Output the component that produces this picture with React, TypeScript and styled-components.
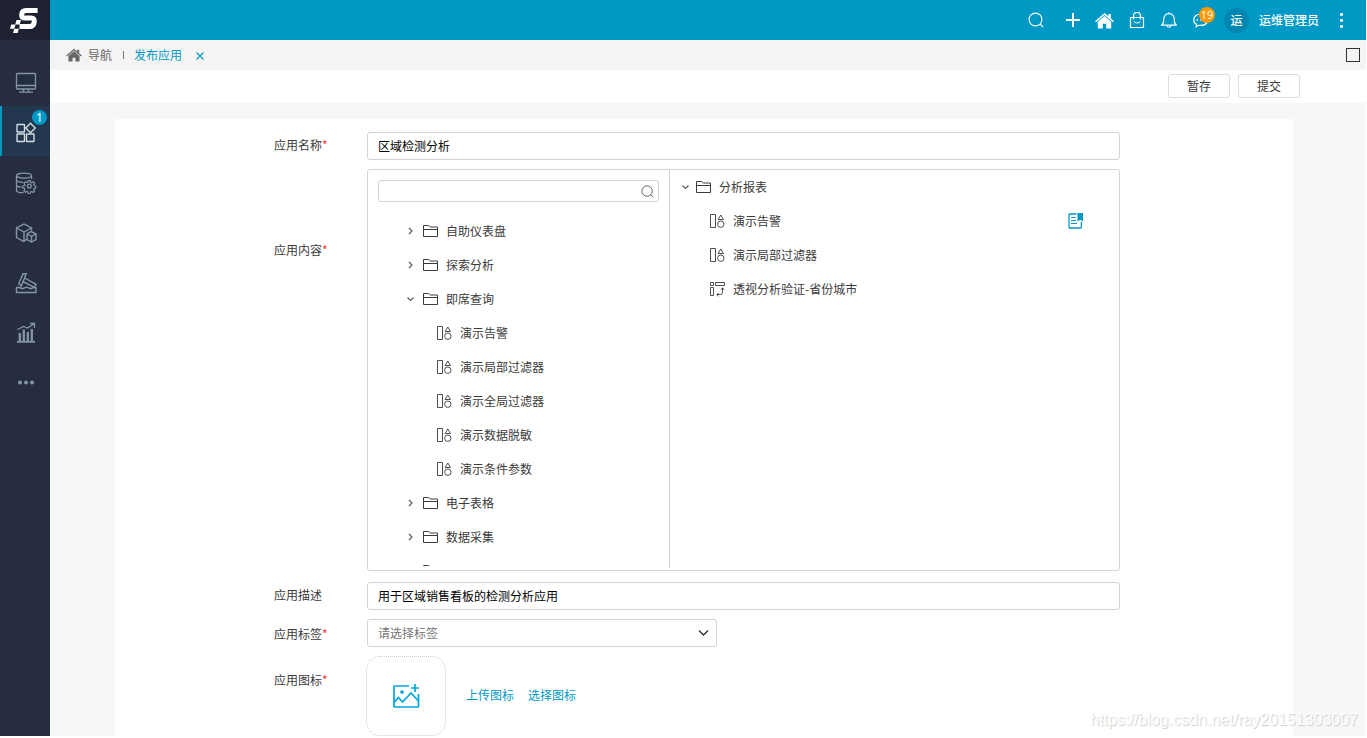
import React from 'react';
import styled, { createGlobalStyle } from 'styled-components';

const GlobalStyle = createGlobalStyle`
  *, *::before, *::after { box-sizing: border-box; }
  body {
    margin: 0;
    background: #fff;
    color: #3a3a3a;
    font: 12px/18px 'Noto Sans CJK SC', sans-serif;
  }
  button, input, select { font: inherit; color: inherit; }
  button { padding: 0; border: 0; background: none; cursor: pointer; }
  ul { margin: 0; padding: 0; list-style: none; }
  svg { display: block; flex: none; }
`;

const Shell = styled.div`
  position: relative;
  display: grid;
  grid-template-columns: 50px minmax(0, 1fr);
  padding-right: 1px;
`;

const Sidebar = styled.nav`
  background: #272d41;
`;

const Logo = styled.a`
  display: block;
  height: 40px;
  margin-bottom: 16px;
  background: #1d2131;
`;

const SideItem = styled.button<{ $active?: boolean }>`
  position: relative;
  display: flex;
  align-items: center;
  justify-content: center;
  width: 100%;
  height: 50px;
  padding: 4px 0 0 0;
  border-left: 2px solid ${(p) => (p.$active ? '#0099c6' : 'transparent')};
  background: ${(p) => (p.$active ? '#23384f' : 'transparent')};
  color: ${(p) => (p.$active ? '#d3dce2' : '#8496a6')};
`;

const SideBadge = styled.span`
  position: absolute;
  top: 4px;
  right: 3px;
  width: 15px;
  height: 15px;
  border-radius: 50%;
  background: #0099c6;
  color: #fff;
  font: 12px/15px 'Noto Sans', sans-serif;
  text-align: center;
`;

const Main = styled.div`
  display: flex;
  flex-direction: column;
`;

const Header = styled.header`
  display: flex;
  align-items: center;
  justify-content: flex-end;
  height: 40px;
  padding-right: 15px;
  background: #0098c5;
  color: #fff;
`;

const HeaderButton = styled.button<{ $gap?: boolean }>`
  position: relative;
  display: flex;
  align-items: center;
  justify-content: center;
  width: 32px;
  height: 40px;
  margin-right: ${(p) => (p.$gap ? '5px' : '0')};
`;

const CountBadge = styled.span`
  position: absolute;
  top: 7px;
  left: 14px;
  width: 16px;
  height: 16px;
  border-radius: 50%;
  background: #ff9900;
  font: 11px/16px 'Open Sans', sans-serif;
  text-align: center;
`;

const Avatar = styled.span`
  width: 25px;
  height: 25px;
  margin: 0 10px 0 7px;
  border-radius: 50%;
  background: #0086b0;
  font-weight: 500;
  line-height: 24px;
  text-align: center;
`;

const UserName = styled.span`
  margin-right: 12px;
  font-weight: 500;
`;

const MenuButton = styled.button`
  display: flex;
  align-items: center;
  justify-content: center;
  width: 20px;
  height: 40px;
`;

const TabBar = styled.div`
  display: flex;
  align-items: center;
  height: 30px;
  padding: 0 6px 0 16px;
  background: #f4f4f4;
  color: #666;
`;

const NavLink = styled.a`
  display: flex;
  align-items: center;
  gap: 6px;
  color: #666;
  text-decoration: none;
`;

const Divider = styled.span`
  width: 1px;
  height: 8px;
  margin: 0 10px 0 11px;
  background: #777;
`;

const CurrentTab = styled.a`
  margin-right: 14px;
  color: #0099c6;
  text-decoration: none;
`;

const CloseButton = styled.button`
  padding: 2px 0 0 0;
  color: #0099c6;
`;

const Maximize = styled.button`
  width: 14px;
  height: 14px;
  margin-left: auto;
  border: 1px solid #333;
`;

const Toolbar = styled.div`
  display: flex;
  justify-content: flex-end;
  gap: 8px;
  height: 33px;
  padding: 4px 66px 0 0;
`;

const ToolButton = styled.button`
  width: 62px;
  height: 24px;
  border: 1px solid #ddd;
  border-radius: 3px;
  background: #fff;
`;

const Content = styled.main`
  flex: 1;
  padding: 16px 73px 0 65px;
  background: #f7f7f7;
`;

const Card = styled.form`
  display: flex;
  flex-direction: column;
  gap: 9px;
  padding: 13px 173px 0 159px;
  background: #fff;
`;

const Row = styled.div`
  display: flex;
`;

const Label = styled.label<{ $top?: number }>`
  flex: none;
  width: 93px;
  padding-top: ${(p) => p.$top ?? 4}px;
`;

const Star = styled.span`
  color: #f33;
`;

const TextInput = styled.input`
  flex: 1;
  min-width: 0;
  height: 28px;
  padding: 0 10px 2px;
  border: 1px solid #d4d4d4;
  border-radius: 3px;
  color: #000;
`;

const Panels = styled.div`
  display: grid;
  grid-template-columns: 302px 1fr;
  flex: 1;
  height: 402px;
  margin-bottom: 2px;
  border: 1px solid #d4d4d4;
  border-radius: 3px;
`;

const SourcePanel = styled.div`
  display: flex;
  flex-direction: column;
  gap: 12px;
  height: 398px;
  padding: 10px 10px 2px;
  border-right: 1px solid #d4d4d4;
`;

const SearchBox = styled.div`
  display: flex;
  align-items: center;
  flex: none;
  height: 22px;
  padding-right: 4px;
  border: 1px solid #d4d4d4;
  border-radius: 3px;
  color: #666;
`;

const SearchInput = styled.input`
  flex: 1;
  min-width: 0;
  height: 18px;
  border: 0;
  background: none;
  outline: none;
`;

const Tree = styled.ul`
  flex: 1;
  min-height: 0;
  overflow: hidden;
`;

const TreeRow = styled.li<{ $indent: number }>`
  display: flex;
  align-items: center;
  height: 34px;
  padding: 0 35px 0 ${(p) => p.$indent}px;
`;

const Toggle = styled.button<{ $gap: number }>`
  width: 9px;
  height: 12px;
  margin-right: ${(p) => p.$gap}px;
  color: #555;
`;

const TreeText = styled.span`
  flex: 1;
  margin-left: 8px;
  white-space: nowrap;
`;

const ActionButton = styled.button`
  color: #0099c6;
`;

const SelectWrap = styled.div`
  position: relative;
  width: 350px;
  color: #333;

  svg {
    position: absolute;
    top: 10px;
    right: 8px;
    pointer-events: none;
  }
`;

const Select = styled.select`
  appearance: none;
  width: 100%;
  height: 28px;
  padding: 0 30px 0 10px;
  border: 1px solid #d4d4d4;
  border-radius: 3px;
  background: #fff;
  color: #757575;
`;

const IconPicker = styled.div`
  display: flex;
  align-items: center;
  gap: 14px;
`;

const IconBox = styled.button`
  display: flex;
  align-items: center;
  justify-content: center;
  width: 80px;
  height: 80px;
  margin: 0 6px 0 -1px;
  border: 1px dotted #ccc;
  border-radius: 14px;
  color: #00a8dc;
`;

const PickLink = styled.a`
  padding-bottom: 2px;
  color: #0099c6;
  text-decoration: none;
`;

const Watermark = styled.span`
  position: absolute;
  right: 9px;
  bottom: 6px;
  color: #fff;
  font: 16px/20px 'Liberation Sans', sans-serif;
  text-shadow: 1px 1px 1px #ccc;
  pointer-events: none;
`;

type SvgProps = { w: number; h: number; sw?: number; children: React.ReactNode };

const Svg = ({ w, h, sw = 1, children }: SvgProps) => (
  <svg width={w} height={h} viewBox={`0 0 ${w} ${h}`} fill="none" stroke="currentColor" strokeWidth={sw} aria-hidden="true">
    {children}
  </svg>
);

const LogoMark = () => (
  <svg width="50" height="40" viewBox="0 0 50 40" aria-hidden="true">
    <path
      d="M37.6 10.4H26Q22.1 10.4 21.700 14.200Q21.300 18 24.800 18H31Q34.800 18 34.300 21.800Q33.700 26.600 29.500 26.600H19.500"
      fill="none" stroke="#fff" strokeWidth="5"
    />
    <path d="M16.500 20h4.500l-1.300 4.400h-4.500zM11.200 24.400h4.300l-1.200 4.400H10zM14.300 28.800h4.600l-1.300 4.200H13z" fill="#fff" />
  </svg>
);

const MonitorIcon = () => (
  <Svg w={22} h={22} sw={1.3}>
    <rect x="1.5" y="1.5" width="19" height="15.5" rx="1" />
    <path d="M1.5 13.5h19M8.5 17v2.5M13.5 17v2.5M4 20.2h14" />
  </Svg>
);

const AppsIcon = () => (
  <Svg w={22} h={22} sw={1.4}>
    <rect x="2" y="2.500" width="7.5" height="7.5" rx=".5" />
    <rect x="2" y="12" width="7.5" height="7.5" rx=".5" />
    <rect x="11.5" y="12" width="7.5" height="7.5" rx=".5" />
    <path d="M15.500 1.300l4.700 4.700-4.700 4.700-4.700-4.700z" />
  </Svg>
);

const DatabaseIcon = () => (
  <Svg w={22} h={22} sw={1.3}>
    <ellipse cx="9" cy="3.6" rx="7.5" ry="2.5" />
    <path d="M1.5 3.6v14.6c0 1.5 3 2.5 7 2.5M16.5 3.6V7M1.5 8.3c.5 1.3 3 2 6.500 2M1.500 13.300c.500 1.300 2.500 1.800 5 1.900" />
    <circle cx="14.300" cy="14" r="1.900" />
    <path d="M13.200 7.900h2.200l.4 1.900 1.300.6 1.700-1.100 1.500 1.600-1 1.600.5 1.300 1.700.4v2.200l-1.800.4-.5 1.200 1 1.600-1.500 1.600-1.700-1.100-1.200.5-.4 1.700h-2.200l-.4-1.800-1.300-.5-1.600 1-1.600-1.500 1.100-1.700-.5-1.200-1.700-.4v-2.200l1.800-.4.5-1.200-1.100-1.700 1.600-1.500 1.600 1 1.200-.5z" transform="translate(1.400 1.400) scale(.9)" />
  </Svg>
);

const CubesIcon = () => (
  <Svg w={22} h={22} sw={1.4}>
    <path d="M12 17l-3.300 2.500L1.500 15.500V6L9 2l7.500 4v2.500M1.500 6L9 10l7.500-4M9 10v9.500" />
    <path d="M16 9.500l5 2.500v5.500L16.500 20 12 17.500V12zM12 12l4.500 2.300L21 12M16.500 14.300V20" />
  </Svg>
);

const GavelIcon = () => (
  <Svg w={22} h={22} sw={1.400}>
    <path d="M8 1.800h3.200L6.300 14 3.800 11.500zM9.700 6L21 12.300l-1.700 3L7.800 9.500" />
    <path d="M1.500 15.500h3l3 1.200 4-1.500 4.500 1.500 2-1h3v4.800h-19.500z" />
  </Svg>
);

const ChartIcon = () => (
  <Svg w={22} h={22} sw={1.300}>
    <path d="M2 19.800h18" strokeWidth="1.800" />
    <path d="M4.800 19v-8M8.800 19V7.500M12.800 19v-9M16.800 19V7" strokeWidth="2.300" />
    <path d="M2.500 7.500l6-3 4 1.500 6.500-4M15 1.500h4.500V6" />
  </Svg>
);

const MoreIcon = () => (
  <Svg w={22} h={22}>
    <g fill="currentColor" stroke="none">
      <circle cx="5" cy="10.500" r="2" />
      <circle cx="11" cy="10.500" r="2" />
      <circle cx="17" cy="10.500" r="2" />
    </g>
  </Svg>
);

const SearchIcon = ({ size = 16 }: { size?: number }) => (
  <svg width={size} height={size} viewBox="0 0 16 16" fill="none" stroke="currentColor" strokeWidth={size > 14 ? 1.1 : 1.2} aria-hidden="true">
    <circle cx="7.500" cy="7.500" r="6.400" />
    <path d="M12 12l3.200 3.200" />
  </svg>
);

const PlusIcon = () => (
  <Svg w={14} h={14} sw={2}><path d="M7 0v14M0 7h14" /></Svg>
);

const HomeIcon = ({ w }: { w: number }) => (
  <svg width={w} height={w - 2} viewBox="0 0 19 17" fill="currentColor" aria-hidden="true">
    <path d="M9.500 1L0 9.200l1 1.100 8.500-7.200 8.500 7.200 1-1.100-3.200-2.800V2h-2.500v2.200z" />
    <path d="M9.500 3.900L2.800 9.700v6.800h5v-4.700h3.400v4.700h5V9.700z" />
  </svg>
);

const BagIcon = () => (
  <Svg w={16} h={16} sw={1.200}>
    <path d="M1.500 5.500h13v10h-13zM4.500 7.500V4a3.500 3.500 0 0 1 7 0v3.500M5 9.500c1.200 2 4.800 2 6 0" />
  </Svg>
);

const BellIcon = () => (
  <Svg w={16} h={16} sw={1.200}>
    <path d="M.5 13.200h15c-1.700-1.200-2.200-2.500-2.200-5 0-4.500-1.800-6.500-5.300-6.500s-5.300 2-5.300 6.500c0 2.500-.5 3.800-2.200 5zM6 13.500c.3 2.300 3.700 2.300 4 0M8 .300v1.500" />
  </Svg>
);

const ChatIcon = () => (
  <Svg w={16} h={16} sw={1.200}>
    <path d="M8 2C4 2 .7 4.300 .7 7.700c0 2 1 3.600 2.800 4.600L3.200 14.800 5.800 13.300c4.700.8 9-1.500 9.200-5.300" />
    <path d="M3.500 8h1.600M7.200 8h1.600M11 8h1.600" strokeWidth="1.600" />
  </Svg>
);

const KebabIcon = () => (
  <Svg w={3} h={15}><path d="M0 1.500h3M0 7.500h3M0 13.500h3" strokeWidth="2.500" /></Svg>
);

const FolderIcon = () => (
  <Svg w={15} h={14}>
    <path d="M.5 12.500v-11h5l2 1.500h7v9.500zM.5 5.500h14" />
  </Svg>
);

const QueryIcon = () => (
  <Svg w={15} h={16} sw={0.9}>
    <path d="M.5 1.500h5v13h-5zM10.800 2l2.700 4.500H8.100z" />
    <circle cx="10.800" cy="11.200" r="3.200" />
  </Svg>
);

const PivotIcon = () => (
  <Svg w={15} h={16} sw={0.9}>
    <path d="M.5 1.500h3v3h-3zM5.500 1.500h9v3h-9zM.5 6.500h3v8h-3zM7 13.500h3.500q2 0 2-2V7M10.700 8.700L12.500 7l1.800 1.700M8.500 11.800L6.800 13.500l1.700 1.700" />
  </Svg>
);

const ReportIcon = () => (
  <Svg w={16} h={16}>
    <path d="M8.500 1H1.700q-.7 0-.7.7v12.600q0 .7.700.7h11q.7 0 .7-.7V9" strokeWidth="1.300" />
    <path d="M3 4.500h4.500M3 7.500h5M3 10.500h6" strokeWidth="1.200" />
    <path d="M9.500 0H15v8.500L12.200 6.800 9.500 8.500z" fill="currentColor" stroke="none" />
  </Svg>
);

const Caret = ({ open }: { open: boolean }) => (
  <Svg w={9} h={9} sw={1.100}>
    <path d={open ? 'M1.500 2.500l3 3 3-3' : 'M3 1l3 3-3 3'} />
  </Svg>
);

const ChevronIcon = () => (
  <Svg w={11} h={9} sw={1.300}><path d="M1 1.500l4.500 4.500 4.500-4.500" /></Svg>
);

const UploadImageIcon = () => (
  <Svg w={28} h={26} sw={1.700}>
    <path d="M17 3H2.500Q2 3 2 3.500v20q0 .5.500.5h23.500q.5 0 .5-.5V11" />
    <path d="M2 19.500l4.500-5 4 4.500L19 10l7.500 8M23 1v8M19 5h8" />
    <circle cx="10" cy="9" r="1" fill="currentColor" />
  </Svg>
);

const CloseIcon = () => (
  <Svg w={8} h={8} sw={1.100}><path d="M.5.5l7 7M7.500.5l-7 7" /></Svg>
);

type Kind = 'folder' | 'query' | 'pivot';
type Node = { name: string; kind: Kind; open?: boolean; action?: boolean };

const sourceNodes: Node[] = [
  { name: '自助仪表盘', kind: 'folder' },
  { name: '探索分析', kind: 'folder' },
  { name: '即席查询', kind: 'folder', open: true },
  { name: '演示告警', kind: 'query' },
  { name: '演示局部过滤器', kind: 'query' },
  { name: '演示全局过滤器', kind: 'query' },
  { name: '演示数据脱敏', kind: 'query' },
  { name: '演示条件参数', kind: 'query' },
  { name: '电子表格', kind: 'folder' },
  { name: '数据采集', kind: 'folder' },
  { name: '', kind: 'folder' },
];

const selectedNodes: Node[] = [
  { name: '分析报表', kind: 'folder', open: true },
  { name: '演示告警', kind: 'query', action: true },
  { name: '演示局部过滤器', kind: 'query' },
  { name: '透视分析验证-省份城市', kind: 'pivot' },
];

const sideItems = [
  { label: '工作台', Icon: MonitorIcon },
  { label: '应用', Icon: AppsIcon, active: true, badge: 1 },
  { label: '数据管理', Icon: DatabaseIcon },
  { label: '模型', Icon: CubesIcon },
  { label: '挖掘', Icon: GavelIcon },
  { label: '分析', Icon: ChartIcon },
  { label: '更多', Icon: MoreIcon },
];

const TOGGLE_WIDTH = 9;
const CHILD_INDENT = 14;

const TreeNode = ({ node, base, gap }: { node: Node; base: number; gap: number }) => (
  <TreeRow $indent={node.kind === 'folder' ? base : base + TOGGLE_WIDTH + gap + CHILD_INDENT}>
    {node.kind === 'folder' && (
      <Toggle type="button" $gap={gap} aria-label={node.open ? '收起' : '展开'}>
        <Caret open={!!node.open} />
      </Toggle>
    )}
    {node.kind === 'folder' && <FolderIcon />}
    {node.kind === 'query' && <QueryIcon />}
    {node.kind === 'pivot' && <PivotIcon />}
    <TreeText>{node.name}</TreeText>
    {node.action && <ActionButton type="button" aria-label="设为首页"><ReportIcon /></ActionButton>}
  </TreeRow>
);

export default function App() {
  return (
    <>
      <GlobalStyle />
      <Shell>
        <Sidebar>
          <Logo href="#" aria-label="首页"><LogoMark /></Logo>
          {sideItems.map(({ label, Icon, active, badge }) => (
            <SideItem key={label} type="button" aria-label={label} $active={active}>
              <Icon />
              {badge && <SideBadge>{badge}</SideBadge>}
            </SideItem>
          ))}
        </Sidebar>
        <Main>
          <Header>
            <HeaderButton $gap aria-label="搜索"><SearchIcon /></HeaderButton>
            <HeaderButton aria-label="新建"><PlusIcon /></HeaderButton>
            <HeaderButton aria-label="主页"><HomeIcon w={19} /></HeaderButton>
            <HeaderButton aria-label="应用商店"><BagIcon /></HeaderButton>
            <HeaderButton aria-label="通知"><BellIcon /></HeaderButton>
            <HeaderButton aria-label="消息"><ChatIcon /><CountBadge>19</CountBadge></HeaderButton>
            <Avatar>运</Avatar>
            <UserName>运维管理员</UserName>
            <MenuButton aria-label="菜单"><KebabIcon /></MenuButton>
          </Header>
          <TabBar>
            <NavLink href="#"><HomeIcon w={16} />导航</NavLink>
            <Divider />
            <CurrentTab href="#">发布应用</CurrentTab>
            <CloseButton aria-label="关闭"><CloseIcon /></CloseButton>
            <Maximize aria-label="最大化" />
          </TabBar>
          <Toolbar>
            <ToolButton type="button">暂存</ToolButton>
            <ToolButton type="button">提交</ToolButton>
          </Toolbar>
          <Content>
            <Card>
              <Row>
                <Label htmlFor="name">应用名称<Star>*</Star></Label>
                <TextInput id="name" defaultValue="区域检测分析" />
              </Row>
              <Row>
                <Label htmlFor="content-search" $top={72}>应用内容<Star>*</Star></Label>
                <Panels>
                  <SourcePanel>
                    <SearchBox>
                      <SearchInput id="content-search" />
                      <SearchIcon size={13} />
                    </SearchBox>
                    <Tree>
                      {sourceNodes.map((n, i) => <TreeNode key={i} node={n} base={28} gap={8} />)}
                    </Tree>
                  </SourcePanel>
                  <Tree>
                    {selectedNodes.map((n, i) => <TreeNode key={i} node={n} base={11} gap={6} />)}
                  </Tree>
                </Panels>
              </Row>
              <Row>
                <Label htmlFor="desc">应用描述</Label>
                <TextInput id="desc" defaultValue="用于区域销售看板的检测分析应用" />
              </Row>
              <Row>
                <Label htmlFor="tag" $top={6}>应用标签<Star>*</Star></Label>
                <SelectWrap>
                  <Select id="tag" defaultValue="">
                    <option value="">请选择标签</option>
                  </Select>
                  <ChevronIcon />
                </SelectWrap>
              </Row>
              <Row>
                <Label htmlFor="icon" $top={15}>应用图标<Star>*</Star></Label>
                <IconPicker>
                  <IconBox id="icon" type="button" aria-label="添加图标"><UploadImageIcon /></IconBox>
                  <PickLink href="#">上传图标</PickLink>
                  <PickLink href="#">选择图标</PickLink>
                </IconPicker>
              </Row>
            </Card>
          </Content>
        </Main>
        <Watermark>https://blog.csdn.net/ray20151303007</Watermark>
      </Shell>
    </>
  );
}
